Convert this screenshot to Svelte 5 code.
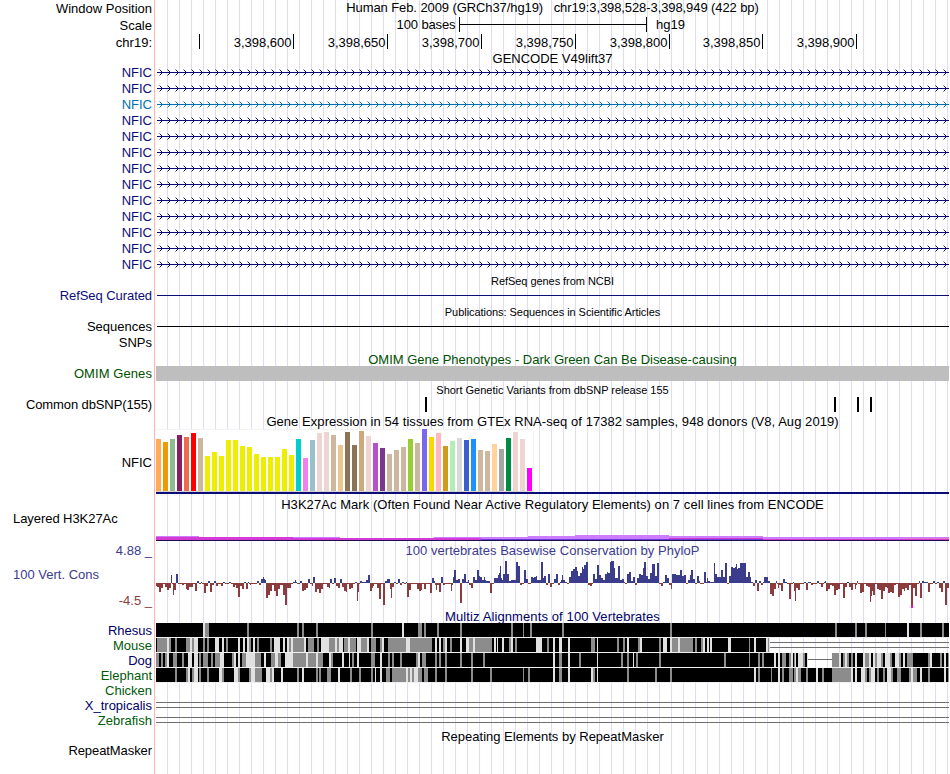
<script lang="ts">
  const LEFT = 156;
  const RIGHT = 949;

  const ticks = [
    { x: 199, label: '' },
    { x: 293, label: '3,398,600' },
    { x: 387, label: '3,398,650' },
    { x: 481, label: '3,398,700' },
    { x: 575, label: '3,398,750' },
    { x: 669, label: '3,398,800' },
    { x: 762, label: '3,398,850' },
    { x: 856, label: '3,398,900' },
  ];

  const genes = Array.from({ length: 13 }, (_, i) => ({ name: 'NFIC', alt: i === 2 }));

  // strand arrows, one every 8px, with soft outer ends
  let arrows = '';
  let arrowEnds = '';
  for (let x = 159; x < RIGHT - 1; x += 8) {
    arrows += `M${x + 1} 6h1v1h1v1h1v1h-1v1h-1v1h-1v-1h1v-1h1v-1h-1v-1h-1z`;
    arrowEnds += `M${x} 5h1v1h-1zM${x} 11h1v1h-1z`;
  }

  const snps = [425, 834, 857, 870];

  const gtex: [string, number][] = [
    ['#ffaa56', 52], ['#ee9a00', 49], ['#8fbc8f', 52], ['#8b1c62', 56], ['#ee6a50', 54], ['#ff0000', 58],
    ['#cdb79e', 53], ['#eeee00', 35], ['#eeee00', 39], ['#eeee00', 35], ['#eeee00', 51], ['#eeee00', 51],
    ['#eeee00', 45], ['#eeee00', 44], ['#eeee00', 37], ['#eeee00', 34], ['#eeee00', 34], ['#eeee00', 34],
    ['#eeee00', 42], ['#eeee00', 36], ['#00cdcd', 52], ['#ee82ee', 33], ['#9ac0cd', 51], ['#eed5d2', 58],
    ['#eed5d2', 59], ['#cdb79e', 56], ['#eec591', 46], ['#8b7355', 59], ['#8b7355', 46], ['#cdaa7d', 60],
    ['#eed5d2', 55], ['#b452cd', 48], ['#7a378b', 43], ['#cdb79e', 37], ['#cdb79e', 41], ['#cdb79e', 44],
    ['#9acd32', 52], ['#cdb79e', 48], ['#7a67ee', 62], ['#ffd700', 54], ['#ffb6c1', 58], ['#cd9b1d', 45],
    ['#b4eeb4', 50], ['#d9d9d9', 53], ['#3a5fcd', 51], ['#1e90ff', 52], ['#cdb79e', 41], ['#cdb79e', 40],
    ['#ffd39b', 47], ['#a6a6a6', 42], ['#008b45', 53], ['#eed5d2', 59], ['#eed5d2', 52], ['#ff00ff', 23],
  ];

  // x, score: each score holds until the next x
  const phylop = `156 -3,157 -4,159 -9,161 -5,163 -1,165 -4,167 -7,169 -5,171 8,172 -1,173 -12,174 -7,176 9,178 -1,
    182 -2,184 -1,186 -6,187 -7,189 -4,193 -1,195 -8,197 2,199 -1,201 1,202 -1,204 -10,206 -3,208 2,210 -9,212 -2,
    214 2,216 -3,218 -1,221 -3,223 1,225 -1,229 1,231 -1,233 -4,235 -2,236 -5,238 -14,240 -3,242 -6,244 1,246 -6,
    248 1,249 -1,250 -2,251 -1,257 2,259 -2,261 4,263 6,264 4,265 3,266 -15,268 -12,270 -8,272 -2,274 -8,276 -13,
    278 -6,280 -2,283 -12,285 -22,287 -5,291 -1,293 1,295 3,296 1,297 -1,300 2,302 -8,304 -7,306 -5,308 4,310 -1,
    312 -3,313 6,315 -9,317 -6,319 -10,321 -6,323 -1,327 -4,329 -5,330 4,332 -1,334 5,336 -3,338 -5,340 4,342 -4,
    344 -8,346 -9,347 -1,349 -6,351 -5,353 -1,355 1,357 -18,358 -9,359 -1,360 2,362 1,366 3,368 8,370 -8,372 -5,
    373 -3,374 -1,377 -5,379 -16,381 -1,383 -22,385 2,387 4,390 -6,391 -15,392 -4,394 1,396 -1,398 4,400 -2,402 1,
    404 -1,406 1,407 -14,409 -7,411 -1,417 -6,419 -8,421 -7,422 -1,424 -6,426 -1,430 -10,432 5,434 2,435 -2,436 -7,
    437 -2,439 -9,441 6,443 -2,445 -1,451 -8,452 -2,453 6,454 13,456 3,458 4,460 -20,462 4,464 9,466 1,468 3,469 -2,
    471 -5,473 6,475 3,477 13,479 7,480 6,482 3,484 6,485 3,486 2,490 -10,492 -1,494 5,498 8,499 10,500 17,501 5,
    502 3,503 9,505 22,507 9,509 2,511 3,516 21,518 17,520 -2,522 -1,524 13,526 4,528 -1,531 6,533 5,534 6,536 7,
    537 3,541 21,543 5,544 7,546 -2,548 9,550 -4,552 -1,554 4,556 9,558 -2,560 1,561 3,562 8,563 3,565 1,567 -1,
    569 6,571 12,573 14,575 16,577 12,578 7,580 10,582 16,583 14,584 18,586 21,588 -2,590 -3,592 -1,593 9,595 4,
    597 18,599 8,601 5,603 3,605 9,607 11,608 10,610 21,611 22,614 15,615 5,618 17,620 3,622 4,624 1,625 -1,627 9,
    629 11,631 2,633 6,635 -2,637 5,639 9,641 8,643 15,644 21,646 7,648 4,650 10,652 19,655 7,657 20,659 -1,661 -3,
    663 1,665 8,667 5,669 -2,671 -6,672 9,676 8,680 13,682 7,684 8,686 -1,688 3,690 8,691 13,693 4,695 -1,697 7,
    699 2,700 -1,704 11,706 1,707 5,708 2,710 1,714 20,715 9,717 6,721 13,723 6,725 20,727 -1,729 7,731 16,733 15,
    735 16,736 19,737 14,738 15,740 20,746 6,748 11,750 6,751 1,753 -3,755 3,757 -8,759 2,761 -2,763 1,764 6,768 2,
    770 -11,772 -13,774 -6,776 2,777 -1,778 -5,779 -2,781 -8,783 4,785 1,787 -1,789 -16,791 -1,793 1,794 -8,795 -18,
    796 -5,798 -7,800 -1,804 1,806 -7,808 1,811 -2,813 -1,817 2,819 -1,821 -4,823 -1,824 1,825 2,826 -8,828 -6,
    830 -2,832 -3,834 -12,836 -7,838 -6,840 -1,843 -15,845 -4,847 1,849 -4,851 -7,853 -1,855 -6,856 -2,857 2,858 -1,
    860 -10,862 -9,864 -1,866 -3,868 -4,870 -19,871 -13,872 -8,873 -12,875 -1,877 -6,879 -7,881 -16,883 -8,885 -4,
    887 -5,888 -10,890 -9,892 -10,894 -2,896 -1,898 -14,900 -12,902 -6,904 -8,905 -5,907 -7,909 -2,911 -23,913 -5,
    915 -13,917 -1,919 2,920 -15,922 2,924 1,928 -9,930 -1,933 2,935 -1,937 1,939 -5,941 -9,943 2,945 -22,947 -5`
    .split(',').map((s) => s.trim().split(' ').map(Number));

  const ZERO = 24;
  let conserved = '';
  let accelerated = '';
  phylop.forEach(([x, v], i) => {
    const w = (phylop[i + 1]?.[0] ?? RIGHT) - x;
    if (v > 0) conserved += `M${x} ${ZERO}h${w}v${-v}h${-w}z`;
    else accelerated += `M${x} ${ZERO}h${w}v${-v}h${-w}z`;
  });

  // "x width" pairs: solid = aligned, mid = weaker, pale = weakest
  const species = [
    {
      name: 'Rhesus', green: false, solid: '156 793',
      mid: '205 4,247 2,297 2,302 2,316 2,371 2,418 4,424 2,437 2,460 2,511 2,523 1,530 2,562 2,670 2,835 2,855 2,865 2,885 1,920 2,942 2',
      pale: '203 2,402 2,907 2',
      lines: [],
    },
    {
      name: 'Mouse', green: true, solid: '156 614',
      mid: `157 10,169 2,175 2,186 4,192 2,203 2,207 2,226 2,249 2,257 2,270 2,289 2,293 11,308 6,317 2,329 6,337 2,344 4,
        350 6,361 6,371 5,380 2,388 18,410 22,443 2,450 2,469 4,475 17,509 2,515 2,547 2,591 4,617 2,623 2,638 2,659 2,672 6,680 13,
        695 2,701 2,749 1,768 1`,
      pale: `167 2,190 2,194 4,215 4,222 2,238 2,243 2,247 2,253 2,274 6,283 2,287 2,291 2,304 2,321 2,323 6,335 2,339 4,348 2,
        357 4,367 2,382 2,406 4,435 2,439 2,445 2,460 2,466 3,473 2,494 2,497 1,502 2,511 2,536 6,553 2,559 3,568 2,597 1,
        627 2,640 2,663 4,670 2,678 2,703 2,707 2,710 2,728 3,754 2,766 2,769 1`,
      lines: [{ from: 770, to: 949, y: [4, 9] }],
    },
    {
      name: 'Dog', green: false, solid: '156 652,832 117',
      mid: `156 3,161 2,165 2,173 4,182 2,199 2,203 5,211 2,215 5,232 2,242 4,255 6,271 4,278 3,293 13,308 8,318 5,331 2,
        352 2,371 4,388 2,392 2,400 2,416 2,422 4,435 2,439 2,445 2,460 2,471 2,483 2,559 3,579 2,621 2,627 2,636 2,659 2,
        724 2,749 1,758 2,762 2,782 4,789 2,794 1,803 2,832 7,843 2,847 2,851 2,865 4,875 2,881 2,890 2,899 2,907 6,928 2,940 2,948 1`,
      pale: `167 2,188 4,194 4,220 4,234 2,238 2,246 3,249 6,264 2,275 3,285 8,306 2,316 2,329 2,342 2,349 1,357 2,380 2,
        418 2,553 2,568 2,597 1,633 1,774 2,778 2,791 2,795 1,798 5,807 1,839 2,845 2,855 2,863 2,869 2,873 2,877 4,885 5,
        895 4,903 2,930 2,944 2`,
      lines: [{ from: 808, to: 832, y: [6] }],
    },
    {
      name: 'Elephant', green: true, solid: '156 793',
      mid: `175 2,186 2,192 2,199 2,207 2,222 2,238 2,249 2,255 7,270 2,297 2,316 2,319 2,327 4,350 2,359 2,371 2,386 4,
        392 14,408 2,412 2,418 4,424 4,435 2,445 2,471 2,490 2,523 1,528 2,559 3,593 2,627 2,655 2,670 2,758 2,771 1,782 2,
        789 4,794 2,798 3,806 2,822 2,832 19,865 2,869 2,877 2,883 2,891 2,897 4,909 2,913 4,928 2,948 1`,
      pale: `188 2,194 4,219 3,234 4,251 4,266 4,272 2,281 2,302 2,338 2,375 1,380 2,406 2,410 2,414 4,553 2,568 2,591 2,
        597 1,754 2,778 2,796 2,816 2,851 2,855 2,861 4,871 4,887 4,911 2,920 2,944 2`,
      lines: [],
    },
    { name: 'Chicken', green: true, solid: '', mid: '', pale: '', lines: [] },
    { name: 'X_tropicalis', green: false, solid: '', mid: '', pale: '', lines: [{ from: LEFT, to: RIGHT, y: [4, 9] }] },
    { name: 'Zebrafish', green: true, solid: '', mid: '', pale: '', lines: [{ from: LEFT, to: RIGHT, y: [4, 9] }] },
  ];

  function blocks(list: string, h: number) {
    if (!list) return '';
    return list.split(',').map((s) => {
      const [x, w] = s.trim().split(' ');
      return `M${x} 0h${w}v${h}h-${w}z`;
    }).join('');
  }
</script>

{#snippet title(text: string, kind = '')}
  <div class="row"><h2 class="title {kind}">{text}</h2></div>
{/snippet}

<main class="browser">
  <div class="row head">
    <span class="label">Window Position</span>
    <h1 class="title position">Human Feb. 2009 (GRCh37/hg19) &nbsp; chr19:3,398,528-3,398,949 (422 bp)</h1>
  </div>
  <div class="row head">
    <span class="label">Scale</span>
    <svg class="track" viewBox="156 0 793 17" width="793" height="17">
      <text class="bases" x="455.5" y="12" text-anchor="end">100 bases</text>
      <path d="M459 0h1v7h186v-7h1v15h-1v-7h-186v7h-1z" />
      <text x="656" y="12">hg19</text>
    </svg>
  </div>
  <div class="row head">
    <span class="label">chr19:</span>
    <svg class="track" viewBox="156 0 793 17" width="793" height="17">
      {#each ticks as t}
        <text x={t.x - 1.5} y="13" text-anchor="end">{t.label}</text>
        <rect x={t.x} y="0" width="1" height="15" />
      {/each}
    </svg>
  </div>

  {@render title('GENCODE V49lift37', 'gencode')}
  {#each genes as g}
    <div class="row gene" class:alt={g.alt}>
      <span class="label">{g.name}</span>
      <svg class="track" viewBox="156 0 793 16" width="793" height="16">
        <rect x="157" y="8" width="792" height="1" />
        <path d={arrows} />
        <path d={arrowEnds} opacity="0.45" />
      </svg>
    </div>
  {/each}

  {@render title('RefSeq genes from NCBI', 'small')}
  <div class="row gene">
    <span class="label refseq">RefSeq Curated</span>
    <svg class="track" viewBox="156 0 793 16" width="793" height="16">
      <rect x="157" y="8" width="792" height="1" />
    </svg>
  </div>

  {@render title('Publications: Sequences in Scientific Articles', 'small')}
  <div class="row pubs">
    <span class="label">Sequences</span>
    <svg class="track" viewBox="156 0 793 16" width="793" height="16">
      <rect x="157" y="8" width="792" height="1" />
    </svg>
  </div>
  <div class="row pubs"><span class="label">SNPs</span></div>

  {@render title('OMIM Gene Phenotypes - Dark Green Can Be Disease-causing', 'omim-title')}
  <div class="row omim">
    <span class="label">OMIM Genes</span>
    <div class="omim-bar"></div>
  </div>

  {@render title('Short Genetic Variants from dbSNP release 155', 'small tall')}
  <div class="row snp">
    <span class="label">Common dbSNP(155)</span>
    <svg class="track" viewBox="156 0 793 15" width="793" height="15">
      {#each snps as x}
        <rect {x} y="0" width="2" height="15" />
      {/each}
    </svg>
  </div>

  {@render title('Gene Expression in 54 tissues from GTEx RNA-seq of 17382 samples, 948 donors (V8, Aug 2019)', 'gtex-title')}
  <div class="row gtex">
    <span class="label">NFIC</span>
    <svg class="track" viewBox="156 0 793 66" width="793" height="66">
      <rect x="156" y="1" width="378" height="63" fill="#f2f2f2" />
      <rect x="156" y="2" width="377" height="61" fill="#fff" />
      <rect x="156" y="63" width="377" height="1" fill="#d2d2d2" />
      {#each gtex as [color, h], i}
        <rect x={LEFT + i * 7} y={63 - h} width="5" height={h} fill={color} />
      {/each}
      <rect x="156" y="64" width="793" height="2" fill="#0c0c78" />
    </svg>
  </div>

  {@render title('H3K27Ac Mark (Often Found Near Active Regulatory Elements) on 7 cell lines from ENCODE', 'h3k-title')}
  <div class="row h3k">
    <span class="label left">Layered H3K27Ac</span>
    <svg class="track" viewBox="156 0 793 30" width="793" height="30">
      <path fill="#cc7dff" d="M156 25h43v1h94v0h47v1h94v-1h94v-1h47v-1h94v1h94v1h186v3h-793z" />
      <path fill="#d63ad6" d="M156 26h137v1h141v0h47v1h188v-1h94v1h186v1h-793z" />
      <rect x="481" y="28" width="282" height="1" fill="#6a3ad6" />
      <rect x="905" y="27" width="44" height="1" fill="#e678c8" />
      <rect x="156" y="29" width="793" height="1" fill="#1c0f50" />
    </svg>
  </div>

  <div class="row cons">
    <div class="scale">
      <span class="up">4.88 _</span>
      <span class="name">100 Vert. Cons</span>
      <span class="down">-4.5 _</span>
    </div>
    <div>
      <h2 class="title cons-title">100 vertebrates Basewise Conservation by PhyloP</h2>
      <svg class="track" viewBox="156 0 793 50" width="793" height="50">
        <path fill="#3c3c8c" d={conserved} />
        <path fill="#8c3c3c" d={accelerated} />
        <rect x="911" y="47" width="2" height="2" fill="#ff00ff" />
      </svg>
    </div>
  </div>

  {@render title('Multiz Alignments of 100 Vertebrates', 'multiz-title')}
  {#each species as s}
    <div class="row multiz" class:green={s.green}>
      <span class="label">{s.name}</span>
      <svg class="track" viewBox="156 0 793 15" width="793" height="15">
        <path fill="#f0f0f0" d={blocks(s.solid, 15)} />
        <path d={blocks(s.solid, 14)} />
        <path fill="#8c8c8c" d={blocks(s.mid, 14)} />
        <path fill="#e1e1e1" d={blocks(s.pale, 14)} />
        {#each s.lines as l}
          {#each l.y as y}
            <rect x={l.from} {y} width={l.to - l.from} height="1" fill="#6e6e6e" />
          {/each}
        {/each}
      </svg>
    </div>
  {/each}

  {@render title('Repeating Elements by RepeatMasker', 'repeat-title')}
  <div class="row repeat"><span class="label">RepeatMasker</span></div>
</main>

<style>
  :global(body) {
    background: #fff;
    overflow: hidden;
  }
  .browser {
    width: 950px;
    height: 774px;
    font-family: "Liberation Sans", Arial, sans-serif;
    font-size: 13px;
    line-height: 15px;
    color: #000;
    background:
      linear-gradient(#ffb4b4, #ffb4b4) 154px 0 / 1px 100% no-repeat,
      repeating-linear-gradient(90deg, #dcdcff 0 1px, transparent 1px 12px) 167px 0 / 783px 100% no-repeat;
  }
  .row {
    display: grid;
    grid-template-columns: 156px 793px;
  }
  .label {
    padding-right: 4px;
    text-align: right;
    white-space: nowrap;
  }
  .label.left {
    padding-left: 13px;
    text-align: left;
    letter-spacing: -0.06px;
  }
  .title {
    grid-column: 2;
    margin: 0;
    font-size: 13px;
    font-weight: normal;
    text-align: center;
    white-space: pre;
  }
  .track {
    display: block;
    overflow: hidden;
    shape-rendering: crispEdges;
  }

  .head { height: 17px; }
  .head .label { padding-top: 1px; }
  .position { letter-spacing: -0.09px; }
  .bases { letter-spacing: -0.12px; }
  .gencode { height: 13px; }
  .gene { height: 16px; color: #0c0c78; fill: #0c0c78; }
  .gene.alt { color: #0072b2; fill: #0072b2; }
  .gene .label { padding-top: 1px; height: 15px; }
  .refseq { letter-spacing: -0.07px; }
  .small {
    height: 12px;
    padding-top: 3px;
    font-size: 11px;
    line-height: 12px;
    letter-spacing: -0.05px;
  }
  .small.tall { height: 13px; letter-spacing: -0.02px; }
  .pubs { height: 16px; }
  .pubs .label { padding-top: 1px; height: 15px; }
  .omim-title { height: 14px; padding-top: 2px; color: #005000; }
  .omim { height: 15px; color: #005000; }
  .omim .label { letter-spacing: 0.08px; }
  .omim-bar { background: #bebebe; }
  .snp { height: 15px; letter-spacing: -0.11px; }
  .gtex-title { height: 14px; padding-top: 2px; letter-spacing: 0.055px; }
  .gtex { height: 66px; }
  .gtex .label { padding-top: 27px; }
  .h3k-title { height: 14px; padding-top: 3px; letter-spacing: 0.06px; }
  .h3k { height: 30px; }

  .cons { height: 68px; }
  .cons-title { height: 16px; padding-top: 2px; color: #3c3c8c; letter-spacing: 0.045px; }
  .scale {
    display: flex;
    flex-direction: column;
    padding: 2px 4px 0 13px;
    color: #3c3c8c;
  }
  .scale .up, .scale .down { text-align: right; }
  .scale .name { padding: 9px 0 11px; }
  .scale .down { color: #8c3c3c; }

  .multiz-title { height: 14px; color: #000064; letter-spacing: 0.11px; }
  .multiz { height: 15px; color: #000064; }
  .multiz.green { color: #005a0a; }
  .repeat-title { height: 14px; padding-top: 1px; }
  .repeat { height: 31px; letter-spacing: -0.08px; }
</style>
